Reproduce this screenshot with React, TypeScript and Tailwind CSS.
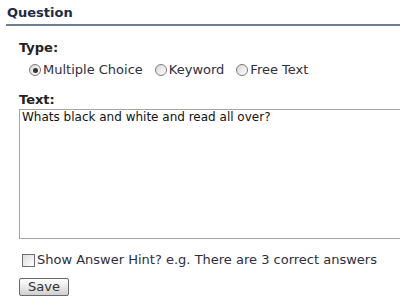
const Radio = ({checked = false}: {checked?: boolean}) => (
  <span className="relative inline-block w-[12px] h-[12px] rounded-full border border-[#7a7a7a] bg-gradient-to-br from-[#d8d8d8] to-white shrink-0">
    {checked && <span className="absolute left-[2.5px] top-[2.5px] w-[5px] h-[5px] rounded-full bg-[#333]" />}
  </span>
)

const Option = ({label, checked}: {label: string; checked?: boolean}) => (
  <label className="flex items-center gap-[2px]">
    <Radio checked={checked} />
    <span>{label}</span>
  </label>
)

export default function App() {
  return (
    <div
      className="w-[400px] h-[307px] overflow-hidden bg-white text-[13px] text-[#2e2e3e]"
      style={{fontFamily: '"DejaVu Sans", Verdana, sans-serif'}}
    >
      <div className="ml-[6px] pt-[5px] pl-[1px] pb-[3px] border-b-2 border-[#6f7d94]">
        <h2 className="font-bold text-[#1f2a44] leading-[16px]">Question</h2>
      </div>
      <div className="pl-[19px] pt-[15px]">
        <p className="font-bold text-[#222] leading-[14px]">Type:</p>
        <div className="flex items-center gap-[12px] pl-[10px] mt-[7px] leading-[16px]">
          <Option label="Multiple Choice" checked />
          <Option label="Keyword" />
          <Option label="Free Text" />
        </div>
        <p className="font-bold text-[#222] leading-[14px] mt-[15px]">Text:</p>
        <textarea
          readOnly
          defaultValue="Whats black and white and read all over?"
          className="block w-[400px] h-[130px] mt-[2px] px-[2px] py-0 border border-[#a5a5a5] resize-none outline-none leading-[15px] text-[#111]"
          style={{fontFamily: '"DejaVu Sans", Verdana, sans-serif', fontSize: '12px'}}
        />
        <label className="flex items-center gap-[2px] mt-[13px] ml-[3px] leading-[16px]">
          <span className="inline-block w-[13px] h-[13px] border border-[#6e6e6e] bg-gradient-to-br from-[#dcdcdc] to-white" />
          <span>Show Answer Hint? e.g. There are 3 correct answers</span>
        </label>
        <button className="mt-[10px] w-[50px] h-[18px] border border-[#6a6a6a] rounded-[2px] bg-gradient-to-b from-white via-[#e9e9e9] to-[#cfcfcf] text-[13px] leading-[14px] text-[#333]">
          Save
        </button>
      </div>
    </div>
  )
}
